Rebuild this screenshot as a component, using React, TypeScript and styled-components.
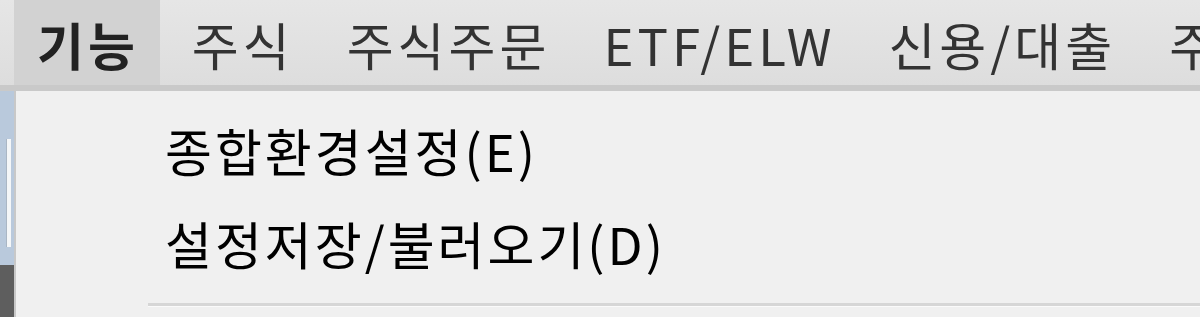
import React from "react";
import styled, { createGlobalStyle } from "styled-components";

const Global = createGlobalStyle`
  html, body { margin: 0; padding: 0; background: #f0f0f0; overflow: hidden; }
  body { font-family: "Noto Sans CJK KR", "Noto Sans", sans-serif; }
`;

const Page = styled.div`
  width: 1200px;
  height: 317px;
  display: flex;
  flex-direction: column;
  overflow: hidden;
`;

const MenuBar = styled.div`
  height: 85px;
  flex: none;
  display: flex;
  align-items: stretch;
  padding-left: 14px;
  background: linear-gradient(#e6e6e6, #dddddd);
  border-bottom: 6px solid #c9c9c9;
  box-shadow: 0 1px 0 #d8d8d8;
`;

const MenuItem = styled.div<{ $active?: boolean }>`
  display: flex;
  align-items: center;
  padding: 2px 21px 0 23px;
  margin-right: 9px;
  background: ${(p) => (p.$active ? "#d2d2d2" : "transparent")};
  font-size: 51px;
  font-weight: ${(p) => (p.$active ? 700 : 400)};
  color: ${(p) => (p.$active ? "#222" : "#333")};
  white-space: nowrap;
  letter-spacing: 4px;
`;

const Body = styled.div`
  flex: 1;
  display: flex;
  min-height: 0;
`;

const LeftStrip = styled.div`
  width: 14px;
  flex: none;
  display: flex;
  flex-direction: column;
  background: #b9c9dc;
`;

const StripTop = styled.div`
  height: 174px;
  display: flex;
  justify-content: flex-end;
  padding: 48px 3px 0 0;
  box-sizing: border-box;
`;

const StripBar = styled.div`
  width: 4px;
  height: 108px;
  background: #f4f6f8;
  box-shadow: -1px 0 0 #aab6c4;
`;

const StripBottom = styled.div`
  flex: 1;
  background: #5e5e5e;
`;

const Dropdown = styled.div`
  flex: 1;
  background: #f0f0f0;
  border-left: 2px solid #c8c8c8;
  padding-top: 12px;
  display: flex;
  flex-direction: column;
`;

const Item = styled.div`
  height: 93px;
  display: flex;
  align-items: center;
  padding-left: 149px;
  font-size: 51px;
  font-weight: 400;
  color: #000;
  white-space: nowrap;
  letter-spacing: 3px;
`;

const Separator = styled.div`
  margin: 14px 0 0 132px;
  height: 3px;
  background: #d6d6d6;
  border-bottom: 1px solid #fafafa;
`;

const menus = ["기능", "주식", "주식주문", "ETF/ELW", "신용/대출", "주"];

export default function App() {
  return (
    <Page>
      <Global />
      <MenuBar>
        {menus.map((m, i) => (
          <MenuItem key={m} $active={i === 0}>
            {m}
          </MenuItem>
        ))}
      </MenuBar>
      <Body>
        <LeftStrip>
          <StripTop>
            <StripBar />
          </StripTop>
          <StripBottom />
        </LeftStrip>
        <Dropdown>
          <Item>종합환경설정(E)</Item>
          <Item>설정저장/불러오기(D)</Item>
          <Separator />
        </Dropdown>
      </Body>
    </Page>
  );
}
